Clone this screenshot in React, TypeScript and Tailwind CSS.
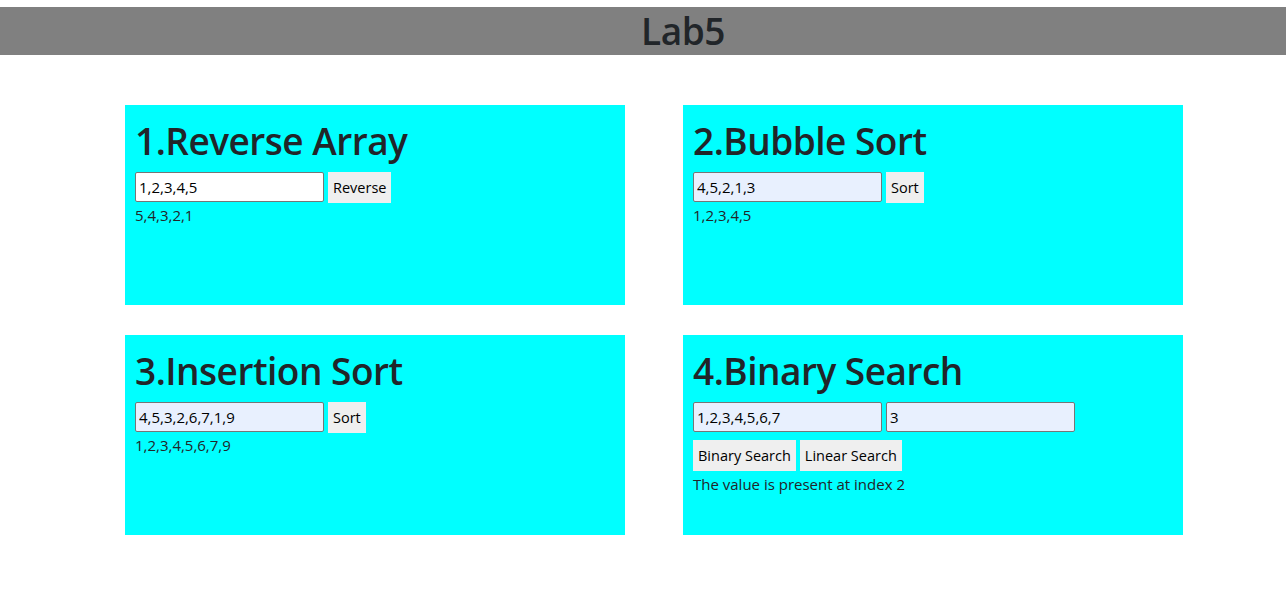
import { useState } from 'react';

const inputCls = 'h-[30px] w-[189px] border border-[#767676] rounded-[2px] px-[3px] text-[15px] text-black outline-none';
const btnCls = 'h-[31px] bg-[#efefef] px-[5px] text-[14.5px] text-black';

function Card({ title, children }: { title: string; children: React.ReactNode }) {
  return (
    <div className="h-[200px] w-[500px] bg-[#00ffff] px-[10px] pt-[12px]">
      <h2 className="text-[37px] font-semibold leading-[48px] text-[#212529] tracking-[-0.5px]">{title}</h2>
      {children}
    </div>
  );
}

export default function App() {
  const [rev, setRev] = useState('1,2,3,4,5');
  const [bub, setBub] = useState('4,5,2,1,3');
  const [ins, setIns] = useState('4,5,3,2,6,7,1,9');
  const [arr, setArr] = useState('1,2,3,4,5,6,7');
  const [val, setVal] = useState('3');

  return (
    <div className="min-h-screen bg-white pt-[7px] font-['Open_Sans','Noto_Sans',sans-serif] text-[#212529]">
      <div className="flex h-[48px] items-center justify-center bg-[#808080] pl-[80px]">
        <h1 className="text-[37px] font-semibold text-[#212529] tracking-[-0.5px]">Lab5</h1>
      </div>

      <div className="grid grid-cols-[500px_500px] gap-x-[58px] gap-y-[30px] pl-[125px] pt-[50px]">
        <Card title="1.Reverse Array">
          <div className="mt-[7px] flex items-start gap-[4px]">
            <input className={`${inputCls} bg-white`} value={rev} onChange={e => setRev(e.target.value)} />
            <button className={btnCls}>Reverse</button>
          </div>
          <p className="mt-[1px] text-[15px] leading-[22px]">5,4,3,2,1</p>
        </Card>

        <Card title="2.Bubble Sort">
          <div className="mt-[7px] flex items-start gap-[4px]">
            <input className={`${inputCls} bg-[#e8f0fe]`} value={bub} onChange={e => setBub(e.target.value)} />
            <button className={btnCls}>Sort</button>
          </div>
          <p className="mt-[1px] text-[15px] leading-[22px]">1,2,3,4,5</p>
        </Card>

        <Card title="3.Insertion Sort">
          <div className="mt-[7px] flex items-start gap-[4px]">
            <input className={`${inputCls} bg-[#e8f0fe]`} value={ins} onChange={e => setIns(e.target.value)} />
            <button className={btnCls}>Sort</button>
          </div>
          <p className="mt-[1px] text-[15px] leading-[22px]">1,2,3,4,5,6,7,9</p>
        </Card>

        <Card title="4.Binary Search">
          <div className="mt-[7px] flex items-start gap-[4px]">
            <input className={`${inputCls} bg-[#e8f0fe]`} value={arr} onChange={e => setArr(e.target.value)} />
            <input className={`${inputCls} bg-[#e8f0fe]`} value={val} onChange={e => setVal(e.target.value)} />
          </div>
          <div className="mt-[8px] flex gap-[4px]">
            <button className={btnCls}>Binary Search</button>
            <button className={btnCls}>Linear Search</button>
          </div>
          <p className="mt-[2px] text-[15px] leading-[22px]">The value is present at index 2</p>
        </Card>
      </div>
    </div>
  );
}
